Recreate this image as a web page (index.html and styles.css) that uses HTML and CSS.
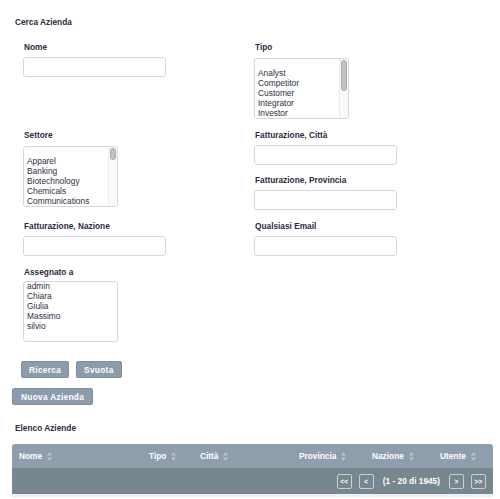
FILE: index.html
```html
<!DOCTYPE html>
<html lang="it">
<head>
<meta charset="utf-8">
<title>Aziende</title>
<link rel="stylesheet" href="styles.css">
</head>
<body>
<section class="search">
  <h2 class="section-title">Cerca Azienda</h2>
  <div class="form-grid">
    <div class="field">
      <label class="label">Nome</label>
      <input class="text-input" type="text">
    </div>
    <div class="field">
      <label class="label label-list">Tipo</label>
      <div class="list">
        <div class="list-options">
          <div class="opt">&nbsp;</div>
          <div class="opt">Analyst</div>
          <div class="opt">Competitor</div>
          <div class="opt">Customer</div>
          <div class="opt">Integrator</div>
          <div class="opt">Investor</div>
        </div>
        <div class="scroll-track"><div class="scroll-thumb thumb-tipo"></div></div>
      </div>
    </div>
    <div class="field">
      <label class="label label-list">Settore</label>
      <div class="list">
        <div class="list-options">
          <div class="opt">&nbsp;</div>
          <div class="opt">Apparel</div>
          <div class="opt">Banking</div>
          <div class="opt">Biotechnology</div>
          <div class="opt">Chemicals</div>
          <div class="opt">Communications</div>
        </div>
        <div class="scroll-track"><div class="scroll-thumb thumb-settore"></div></div>
      </div>
    </div>
    <div class="stack">
      <div class="field">
        <label class="label">Fatturazione, Città</label>
        <input class="text-input" type="text">
      </div>
      <div class="field">
        <label class="label">Fatturazione, Provincia</label>
        <input class="text-input" type="text">
      </div>
    </div>
    <div class="field">
      <label class="label">Fatturazione, Nazione</label>
      <input class="text-input" type="text">
    </div>
    <div class="field">
      <label class="label">Qualsiasi Email</label>
      <input class="text-input" type="text">
    </div>
    <div class="field">
      <label class="label label-tight">Assegnato a</label>
      <div class="list">
        <div class="list-options">
          <div class="opt">admin</div>
          <div class="opt">Chiara</div>
          <div class="opt">Giulia</div>
          <div class="opt">Massimo</div>
          <div class="opt">silvio</div>
        </div>
      </div>
    </div>
  </div>
  <div class="actions">
    <button class="btn" type="button">Ricerca</button>
    <button class="btn" type="button">Svuota</button>
  </div>
  <div class="new-row">
    <button class="btn btn-wide" type="button">Nuova Azienda</button>
  </div>
</section>

<section class="results">
  <h2 class="section-title">Elenco Aziende</h2>
  <div class="grid-table">
    <div class="thead">
      <div class="th">Nome <svg class="sort" viewBox="0 0 5 9" width="5" height="9"><path d="M2.5 0L5 3.6H0Z M2.5 9L0 5.4H5Z"/></svg></div>
      <div class="th">Tipo <svg class="sort" viewBox="0 0 5 9" width="5" height="9"><path d="M2.5 0L5 3.6H0Z M2.5 9L0 5.4H5Z"/></svg></div>
      <div class="th">Città <svg class="sort" viewBox="0 0 5 9" width="5" height="9"><path d="M2.5 0L5 3.6H0Z M2.5 9L0 5.4H5Z"/></svg></div>
      <div class="th">Provincia <svg class="sort" viewBox="0 0 5 9" width="5" height="9"><path d="M2.5 0L5 3.6H0Z M2.5 9L0 5.4H5Z"/></svg></div>
      <div class="th">Nazione <svg class="sort" viewBox="0 0 5 9" width="5" height="9"><path d="M2.5 0L5 3.6H0Z M2.5 9L0 5.4H5Z"/></svg></div>
      <div class="th">Utente <svg class="sort" viewBox="0 0 5 9" width="5" height="9"><path d="M2.5 0L5 3.6H0Z M2.5 9L0 5.4H5Z"/></svg></div>
    </div>
    <div class="pager">
      <span class="page-btn">&lt;&lt;</span>
      <span class="page-btn">&lt;</span>
      <span class="page-info">(1 - 20 di 1945)</span>
      <span class="page-btn">&gt;</span>
      <span class="page-btn">&gt;&gt;</span>
    </div>
  </div>
</section>
</body>
</html>
```

FILE: styles.css
```css
* { box-sizing: border-box; }

body {
  margin: 0;
  font-family: "Liberation Sans", Arial, Helvetica, sans-serif;
  font-size: 8.3px;
  color: #2b2c3e;
  background: #ffffff;
}

.search { padding-top: 17px; }

.section-title {
  margin: 0;
  padding-left: 15px;
  font-size: 8.3px;
  font-weight: bold;
  line-height: 11px;
  color: #2a2b3c;
}

.form-grid {
  display: grid;
  grid-template-columns: 231px 231px;
  row-gap: 11px;
  align-items: start;
  margin: 14px 0 0 23px;
}

.stack {
  display: flex;
  flex-direction: column;
  gap: 10px;
}

.label {
  display: block;
  font-weight: bold;
  line-height: 11px;
  margin-bottom: 4px;
  padding-left: 1px;
}
.label-list { margin-bottom: 5px; }
.label-tight { margin-bottom: 3px; }

.text-input {
  display: block;
  width: 143px;
  height: 20px;
  margin: 0;
  padding: 0 4px;
  border: 1px solid #d5d8dd;
  border-radius: 3px;
  background: #fff;
  font: inherit;
}

.list {
  display: flex;
  width: 95px;
  height: 61px;
  border: 1px solid #d5d8dd;
  border-radius: 3px;
  background: #fff;
  overflow: hidden;
}

.list-options {
  flex: 1;
  margin-top: -1px;
  padding: 0 0 0 3px;
  font-size: 8.4px;
  line-height: 10px;
  color: #2e2f42;
  white-space: nowrap;
  overflow: hidden;
}

.scroll-track {
  width: 9px;
  padding: 1px 1px 0 1px;
  border-left: 1px solid #ececec;
  background: #fafafa;
}

.scroll-thumb {
  width: 6px;
  background: #c3c3c3;
  border: 1px solid #a7a7a7;
  border-radius: 4px;
}
.thumb-tipo { height: 31px; }
.thumb-settore { height: 12px; }

.actions {
  display: flex;
  gap: 7px;
  margin: 19px 0 0 21px;
}

.new-row { margin: 10px 0 0 12px; }

.btn {
  height: 17px;
  margin: 0;
  padding: 0 7px;
  background: #8d9cab;
  color: #ffffff;
  border: 1px solid #7f8e9c;
  border-radius: 2px;
  font-family: "Liberation Sans", Arial, sans-serif;
  font-size: 8.3px;
  font-weight: bold;
  letter-spacing: 0.3px;
}
.btn-wide { padding: 0 8px; }

.results { margin-top: 18px; }

.grid-table {
  margin: 10px 7px 0 12px;
  border-radius: 3px 3px 0 0;
  overflow: hidden;
}

.thead {
  display: grid;
  grid-template-columns: 130px 51px 99px 73px 68px 60px;
  align-items: center;
  height: 24px;
  background: #8f9eac;
  color: #ffffff;
  font-weight: bold;
}

.th {
  display: flex;
  align-items: center;
  gap: 5px;
  padding-left: 7px;
}

.sort { fill: #b9c4ce; }

.pager {
  display: flex;
  justify-content: flex-end;
  align-items: center;
  gap: 7px;
  height: 29px;
  padding: 0 7px 0 0;
  background: #77868f;
  border-bottom: 3px solid #eef0f2;
  color: #ffffff;
  font-weight: bold;
}

.page-btn {
  display: flex;
  align-items: center;
  justify-content: center;
  width: 15px;
  height: 15px;
  border: 1px solid #c8cfd5;
  border-radius: 2px;
  font-size: 6.5px;
  letter-spacing: 0.2px;
}

.page-info { margin: 0 2px 0 2px; }
```
